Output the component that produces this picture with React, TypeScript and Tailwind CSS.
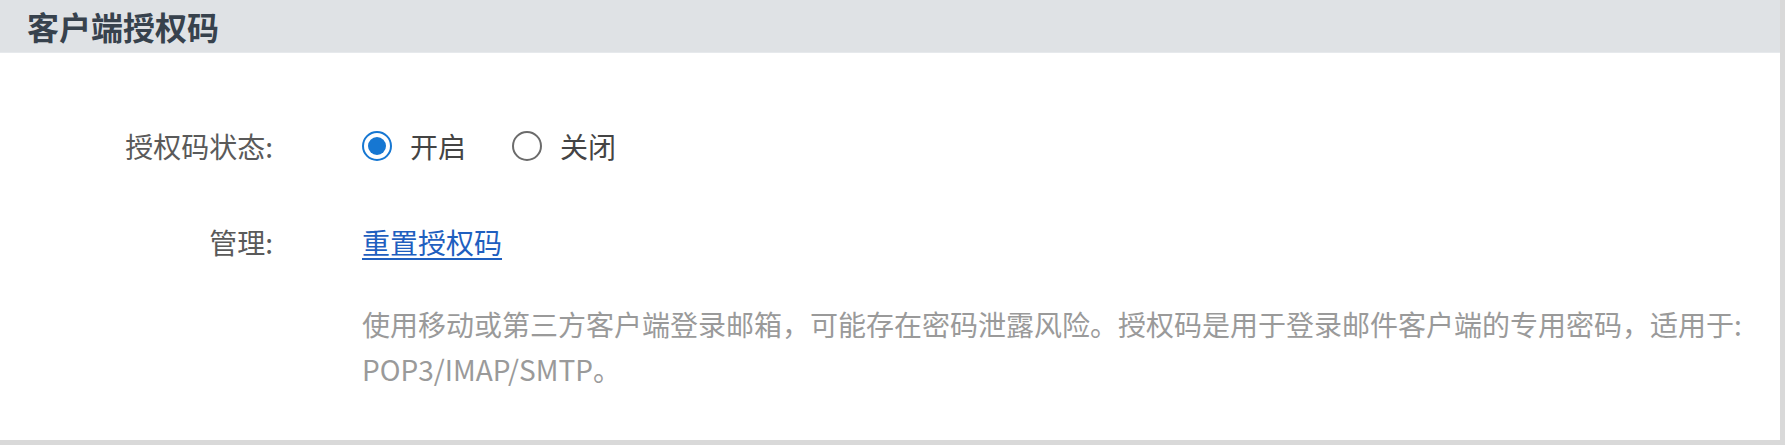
import React, { useState } from 'react';

const font = { fontFamily: '"Noto Sans CJK SC", "Noto Sans", sans-serif' };

function Radio({ checked, label, onClick }: { checked: boolean; label: string; onClick: () => void }) {
  return (
    <button onClick={onClick} className="flex items-center gap-[18px] cursor-pointer">
      {checked ? (
        <span className="w-[30px] h-[30px] rounded-full border-[2px] border-[#1677d2] flex items-center justify-center">
          <span className="w-[18px] h-[18px] rounded-full bg-[#1677d2]" />
        </span>
      ) : (
        <span className="w-[30px] h-[30px] rounded-full border-[2px] border-[#6b6b6b]" />
      )}
      <span className="text-[28px] text-[#444]">{label}</span>
    </button>
  );
}

export default function App() {
  const [enabled, setEnabled] = useState(true);

  return (
    <div className="w-[1785px] h-[445px] bg-white border-r-[5px] border-b-[5px] border-[#d9d9d9]" style={font}>
      {/* Header */}
      <div className="h-[53px] bg-[#dfe2e5] border-b border-[#e6e9ec] flex items-center px-[27px]">
        <h2 className="text-[32px] font-bold text-[#37424d]">客户端授权码</h2>
      </div>

      {/* Body */}
      <div className="grid grid-cols-[273px_1fr] gap-x-[89px] pt-[75px] pr-[8px]">
        <div className="text-right text-[28px] leading-[36px] text-[#5a5a5a]">授权码状态:</div>
        <div className="flex items-center gap-[46px] h-[36px]">
          <Radio checked={enabled} label="开启" onClick={() => setEnabled(true)} />
          <Radio checked={!enabled} label="关闭" onClick={() => setEnabled(false)} />
        </div>

        <div className="mt-[60px] text-right text-[28px] leading-[36px] text-[#5a5a5a]">管理:</div>
        <div className="mt-[60px] text-[28px] leading-[36px]">
          <a href="#" className="text-[#1f5fbf] underline underline-offset-4">重置授权码</a>
        </div>

        <div />
        <p className="mt-[42px] text-[28px] leading-[45px] text-[#9a9a9a]">
          使用移动或第三方客户端登录邮箱，可能存在密码泄露风险。授权码是用于登录邮件客户端的专用密码，适用于: POP3/IMAP/SMTP。
        </p>
      </div>
    </div>
  );
}
